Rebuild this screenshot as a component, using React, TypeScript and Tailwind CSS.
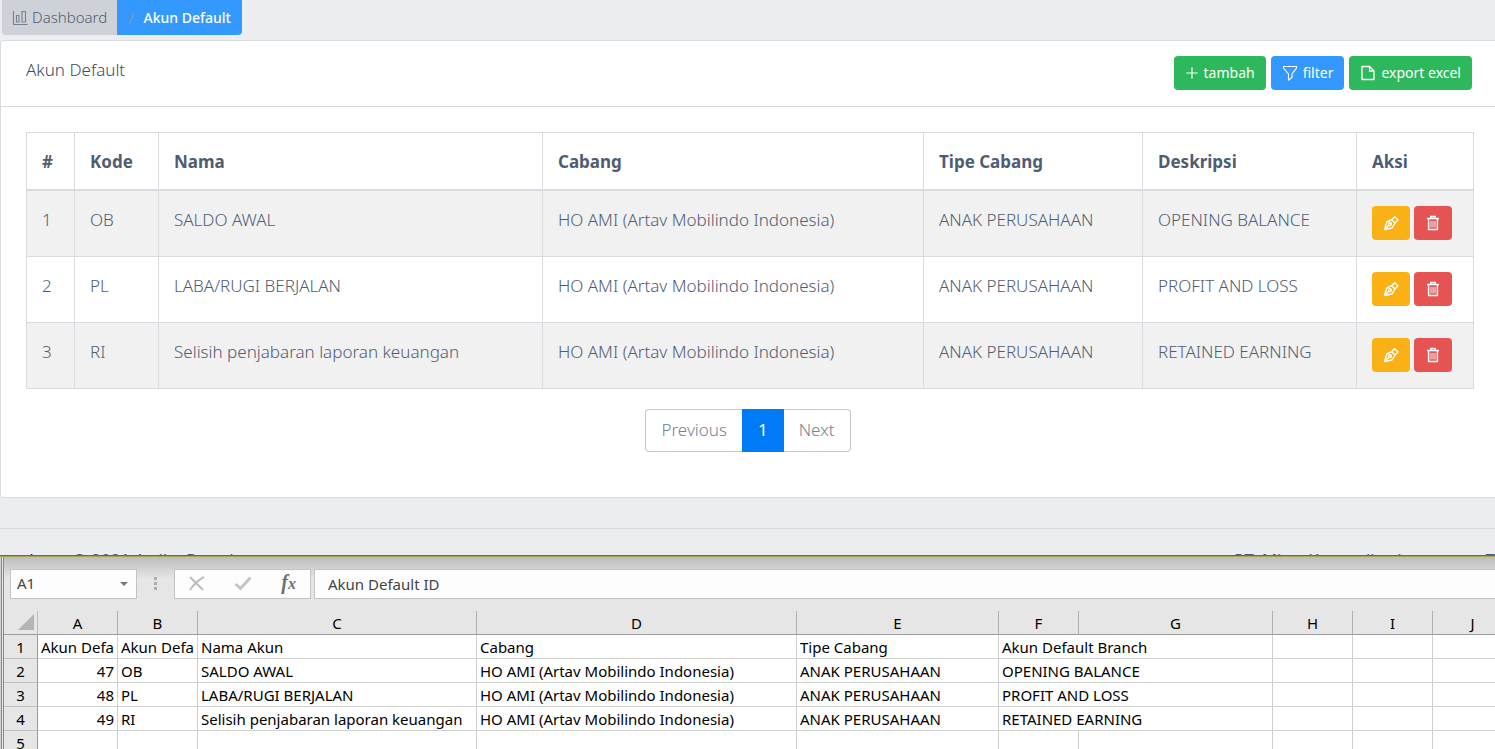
import type { ReactNode } from 'react';

const accounts = [
  { id: 47, kode: 'OB', nama: 'SALDO AWAL', cabang: 'HO AMI (Artav Mobilindo Indonesia)', tipe: 'ANAK PERUSAHAAN', deskripsi: 'OPENING BALANCE' },
  { id: 48, kode: 'PL', nama: 'LABA/RUGI BERJALAN', cabang: 'HO AMI (Artav Mobilindo Indonesia)', tipe: 'ANAK PERUSAHAAN', deskripsi: 'PROFIT AND LOSS' },
  { id: 49, kode: 'RI', nama: 'Selisih penjabaran laporan keuangan', cabang: 'HO AMI (Artav Mobilindo Indonesia)', tipe: 'ANAK PERUSAHAAN', deskripsi: 'RETAINED EARNING' },
];

const headings = ['#', 'Kode', 'Nama', 'Cabang', 'Tipe Cabang', 'Deskripsi', 'Aksi'];
const letters = ['A', 'B', 'C', 'D', 'E', 'F', 'G', 'H', 'I', 'J'];

function Icon({ size = 16, children }: { size?: number; children: ReactNode }) {
  return (
    <svg width={size} height={size} viewBox="0 0 16 16" fill="none" stroke="currentColor" strokeWidth="1.1" aria-hidden="true" className="shrink-0">
      {children}
    </svg>
  );
}

const ChartIcon = () => (
  <Icon>
    <path d="M1.5 1v13.5H15.5M4.5 5.500h2.500v6.500H4.500zM10 1.500h3.500v10.500H10z" />
  </Icon>
);
const PlusIcon = () => (
  <Icon size={14}>
    <path d="M8 1.500v13M1.500 8h13" strokeWidth="1.300" />
  </Icon>
);
const FilterIcon = () => (
  <Icon>
    <path d="M1.500 1.500h13v1.500L10 9v3.500L6.500 15V9L1.500 3z" />
  </Icon>
);
const FileIcon = () => (
  <Icon>
    <path d="M2 1.500h7.500l4.500 4.500v8.500H2zM9.500 1.500V6H14" strokeWidth="1.300" />
  </Icon>
);
const NibIcon = () => (
  <Icon>
    <path
      d="M8.700 4.700l3-3 3.300 3.300-3 3zM8.700 4.700L3.800 7 1.500 14.500 9 13l3-5M1.500 14.500l4.400-4.200"
      strokeWidth="1.400"
      strokeLinejoin="round"
    />
    <circle cx="7" cy="9.200" r="1.400" strokeWidth="1.400" />
  </Icon>
);
const TrashIcon = () => (
  <Icon>
    <path d="M2 3.500h12M5.800 3.300V1.600h4.400v1.700M3.600 4v10.400h8.800V4" strokeWidth="1.500" />
    <path d="M6 6v6.500M8 6v6.500M10 6v6.500" strokeWidth="1.100" opacity="0.800" />
  </Icon>
);

function ToolButton({ tone, children }: { tone: string; children: ReactNode }) {
  return (
    <button type="button" className={`flex h-[34px] items-center gap-[5px] rounded-[4px] px-[11px] text-sm font-normal text-white ${tone}`}>
      {children}
    </button>
  );
}

function AccountTable() {
  return (
    <table className="w-full table-fixed border-collapse border border-[#d8dbe0] text-left text-[17px] leading-[27px]">
      <colgroup>
        <col className="w-12" />
        <col className="w-[84px]" />
        <col className="w-[384px]" />
        <col />
        <col className="w-[219px]" />
        <col className="w-[214px]" />
        <col className="w-[117px]" />
      </colgroup>
      <thead>
        <tr>
          {headings.map((h) => (
            <th key={h} scope="col" className="border border-b-2 border-[#d8dbe0] px-[15px] pt-[15px] pb-[14px] font-bold">
              {h}
            </th>
          ))}
        </tr>
      </thead>
      <tbody>
        {accounts.map((a, i) => (
          <tr key={a.id} className="h-[66px] odd:bg-[#f1f1f1]">
            {[i + 1, a.kode, a.nama, a.cabang, a.tipe, a.deskripsi].map((v, c) => (
              <td key={c} className="border border-[#d8dbe0] px-[15px] pt-[15px] align-top">
                {v}
              </td>
            ))}
            <td className="border border-[#d8dbe0] px-[15px] pt-[15px] align-top">
              <div className="flex gap-1">
                <button type="button" aria-label="Edit" className="flex h-[34px] w-[38px] items-center justify-center rounded-[4px] bg-[#f9b115] text-white">
                  <NibIcon />
                </button>
                <button type="button" aria-label="Hapus" className="flex h-[34px] w-[38px] items-center justify-center rounded-[4px] bg-[#e55353] text-white">
                  <TrashIcon />
                </button>
              </div>
            </td>
          </tr>
        ))}
      </tbody>
    </table>
  );
}

const cell = 'overflow-hidden border-r border-b border-[#d0d0d0] px-[3px] pt-px whitespace-nowrap';
const rowHead = 'border-r border-b border-r-[#9b9b9b] border-b-[#bdbdbd] bg-[#e6e6e6] pt-px text-center font-normal';

function Sheet() {
  return (
    <table className="w-[1509px] table-fixed border-separate border-spacing-0 bg-white text-[15px] leading-[22px] text-black">
      <colgroup>
        <col className="w-[34px]" />
        <col className="w-20" />
        <col className="w-20" />
        <col className="w-[279px]" />
        <col className="w-80" />
        <col className="w-[202px]" />
        <col className="w-20" />
        <col className="w-[194px]" />
        <col className="w-20" />
        <col className="w-20" />
        <col className="w-20" />
      </colgroup>
      <thead>
        <tr className="h-6 bg-[#e6e6e6]">
          <td className="border-r border-b border-r-[#bdbdbd] border-b-[#9b9b9b] p-0">
            <svg width="16" height="16" viewBox="0 0 16 16" className="mr-[3px] ml-auto" aria-hidden="true">
              <path d="M16 0v16H0z" fill="#b4b4b4" />
            </svg>
          </td>
          {letters.map((l) => (
            <th key={l} scope="col" className="border-r border-b border-r-[#b0b0b0] border-b-[#9b9b9b] pt-px text-center font-normal">
              {l}
            </th>
          ))}
        </tr>
      </thead>
      <tbody>
        <tr>
          <th scope="row" className={rowHead}>1</th>
          <td className={cell}>Akun Defa</td>
          <td className={cell}>Akun Defa</td>
          <td className={cell}>Nama Akun</td>
          <td className={cell}>Cabang</td>
          <td className={cell}>Tipe Cabang</td>
          <td colSpan={2} className={cell}>Akun Default Branch</td>
          <td className={cell} />
          <td className={cell} />
          <td className={cell} />
        </tr>
        {accounts.map((a, i) => (
          <tr key={a.id}>
            <th scope="row" className={rowHead}>{i + 2}</th>
            <td className={`${cell} text-right`}>{a.id}</td>
            <td className={cell}>{a.kode}</td>
            <td className={cell}>{a.nama}</td>
            <td className={cell}>{a.cabang}</td>
            <td className={cell}>{a.tipe}</td>
            <td colSpan={2} className={cell}>{a.deskripsi}</td>
            <td className={cell} />
            <td className={cell} />
            <td className={cell} />
          </tr>
        ))}
        <tr>
          <th scope="row" className={rowHead}>5</th>
          {letters.map((l) => (
            <td key={l} className={cell} />
          ))}
        </tr>
      </tbody>
    </table>
  );
}

function FormulaBar() {
  return (
    <div className="flex h-[54px] items-start bg-linear-to-b from-[#bcbcbc] to-[#e6e6e6] to-40% pt-3 pl-[6px] text-[15px] text-[#444]">
      <div className="flex h-[30px] w-[127px] items-center justify-between border border-[#c3c3c3] bg-[#fdfdfd] pr-2 pl-[6px]">
        <input aria-label="Name box" defaultValue="A1" className="w-20 bg-transparent outline-none" />
        <svg width="8" height="4" viewBox="0 0 8 4" aria-hidden="true">
          <path d="M0 0h8L4 4z" fill="#777" />
        </svg>
      </div>
      <svg width="37" height="30" viewBox="0 0 37 30" fill="#adadad" aria-hidden="true">
        <path d="M17 8h3v3h-3zM17 13h3v3h-3zM17 18h3v3h-3z" />
      </svg>
      <div className="flex h-[30px] w-[137px] items-center justify-between border border-[#c3c3c3] bg-[#fdfdfd] px-[14px]">
        <button type="button" aria-label="Cancel">
          <svg width="16" height="15" viewBox="0 0 16 15" fill="none" stroke="#bebebe" strokeWidth="2" aria-hidden="true">
            <path d="M1 1l13 13M15 1C9 4 5 8 1 14" />
          </svg>
        </button>
        <button type="button" aria-label="Enter">
          <svg width="18" height="15" viewBox="0 0 18 15" fill="none" stroke="#c4c4c4" strokeWidth="3" aria-hidden="true">
            <path d="M1.500 8l5 4.500L16.500 1.500" />
          </svg>
        </button>
        <button type="button" aria-label="Insert function" className="font-['Liberation_Serif',serif] text-xl leading-5 font-bold text-[#707070] italic">
          f<span className="text-base">x</span>
        </button>
      </div>
      <input aria-label="Formula" defaultValue="Akun Default ID" className="ml-[3px] h-[30px] min-w-0 flex-1 border border-r-0 border-[#c3c3c3] bg-[#fdfdfd] px-[13px] outline-none" />
    </div>
  );
}

export default function App() {
  return (
    <div className="flex h-screen flex-col overflow-hidden bg-[#ebedef] font-['Noto_Sans',sans-serif] font-light text-[#4f5d73]">
      <nav aria-label="Breadcrumb" className="ml-[2px] flex h-[35px] shrink-0 self-start overflow-hidden rounded-b-[4px] text-[15px]">
        <a href="#dashboard" className="flex items-center gap-1 bg-[#ced2d8] px-[10px]">
          <span className="text-[#768192]">
            <ChartIcon />
          </span>
          Dashboard
        </a>
        <a href="#akun-default" className="flex items-center gap-[10px] bg-[#39f] px-[11px] text-sm font-medium text-white">
          <span className="text-[#8a93a2]">/</span>
          Akun Default
        </a>
      </nav>

      <main className="mt-[5px] shrink-0 rounded-l-[4px] border border-r-0 border-[#d8dbe0] bg-white">
        <header className="flex h-[66px] items-start justify-between border-b border-[#d8dbe0] pt-[15px] pr-[23px] pl-[25px]">
          <h1 className="text-[17px] leading-[27px] text-[#3c4b64]">Akun Default</h1>
          <div className="flex gap-[5px]">
            <ToolButton tone="bg-[#2eb85c]">
              <PlusIcon />
              tambah
            </ToolButton>
            <ToolButton tone="bg-[#39f]">
              <FilterIcon />
              filter
            </ToolButton>
            <ToolButton tone="bg-[#2eb85c]">
              <FileIcon />
              export excel
            </ToolButton>
          </div>
        </header>
        <div className="pt-[25px] pr-[21px] pl-[25px]">
          <AccountTable />
        </div>
        <nav aria-label="Pagination" className="mt-5 mb-[45px] flex justify-center text-[17px] text-[#768192]">
          <button type="button" className="h-[43px] rounded-l-[4px] border border-r-0 border-[#c4c9d0] px-[15px]">Previous</button>
          <button type="button" className="h-[43px] bg-[#007bf7] px-4 font-normal text-white">1</button>
          <button type="button" className="h-[43px] rounded-r-[4px] border border-l-0 border-[#c4c9d0] px-[15px]">Next</button>
        </nav>
      </main>

      <footer className="mt-[30px] flex h-[27px] shrink-0 items-start justify-between overflow-hidden border-t border-[#d8dbe0] pt-[17px] pl-[26px] text-[17px] leading-[27px] font-normal">
        <span className="whitespace-nowrap">
          <a href="#artav" className="text-[#321fdb]">Artav</a> © 2021 Artika Portal
        </span>
        <div className="flex w-[261px] justify-between whitespace-nowrap">
          <span>PT. Mitra Komunikasi</span>
          <span>T</span>
        </div>
      </footer>

      <section aria-label="Spreadsheet" className="shrink-0 border-t border-[#6b6b55] font-normal">
        <div className="border-t border-[#a8a25a]">
          <div className="border-l border-[#d0d0d0]">
            <div className="border-l border-[#8a8a8a]">
              <div className="border-l border-[#e6e6e6]">
                <div className="border-l border-[#8a8a8a]">
                  <FormulaBar />
                  <Sheet />
                </div>
              </div>
            </div>
          </div>
        </div>
      </section>
    </div>
  );
}
